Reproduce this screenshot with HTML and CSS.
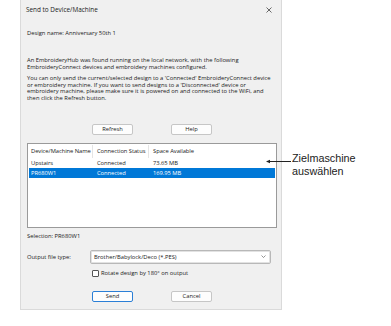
FILE: index.html
```html
<!DOCTYPE html>
<html lang="en">
<head>
    <meta charset="UTF-8">
    <title>Send to Device/Machine</title>
    <link rel="stylesheet" href="styles.css">
</head>
<body>
    <div class="page">
        <div class="dialog">
            <div class="title-bar">
                <span>Send to Device/Machine</span>
                <svg class="close" width="6" height="6" viewBox="0 0 6 6"><path d="M0.5 0.5L5.5 5.5M5.5 0.5L0.5 5.5" stroke="#444" stroke-width="0.8"/></svg>
            </div>

            <p class="design-name">Design name: Anniversary 50th 1</p>

            <p class="info first">An EmbroideryHub was found running on the local network, with the following<br>EmbroideryConnect devices and embroidery machines configured.</p>
            <p class="info">You can only send the current/selected design to a 'Connected' EmbroideryConnect device<br>or embroidery machine. If you want to send designs to a 'Disconnected' device or<br>embroidery machine, please make sure it is powered on and connected to the WiFi, and<br>then click the Refresh button.</p>

            <div class="button-row top-buttons">
                <button class="btn">Refresh</button>
                <button class="btn">Help</button>
            </div>

            <div class="device-list">
                <div class="list-row list-header">
                    <span class="col-name">Device/Machine Name</span>
                    <span class="col-status">Connection Status</span>
                    <span class="col-space">Space Available</span>
                </div>
                <div class="list-row">
                    <span class="col-name">Upstairs</span>
                    <span class="col-status">Connected</span>
                    <span class="col-space">73.65 MB</span>
                </div>
                <div class="list-row selected">
                    <span class="col-name">PR680W1</span>
                    <span class="col-status">Connected</span>
                    <span class="col-space">169.95 MB</span>
                </div>
            </div>

            <p class="selection">Selection: PR680W1</p>

            <div class="output-row">
                <span class="output-label">Output file type:</span>
                <div class="select-box">
                    <span>Brother/Babylock/Deco (*.PES)</span>
                    <svg width="5" height="3" viewBox="0 0 5 3"><path d="M0.5 0.5L2.5 2.5L4.5 0.5" fill="none" stroke="#666" stroke-width="0.7"/></svg>
                </div>
            </div>

            <label class="rotate">
                <span class="checkbox"></span>
                <span>Rotate design by 180° on output</span>
            </label>

            <div class="button-row bottom-buttons">
                <button class="btn default">Send</button>
                <button class="btn">Cancel</button>
            </div>
        </div>

        <div class="callout">
            <svg class="arrow" width="26" height="5" viewBox="0 0 26 5"><path d="M2 2.5H25" stroke="#222" stroke-width="1"/><path d="M0 2.5L4 0.8V4.2Z" fill="#222"/></svg>
            <span class="callout-text">Zielmaschine<br>auswählen</span>
        </div>
    </div>
</body>
</html>
```

FILE: styles.css
```css
body {
    margin: 0;
    background-color: #fff;
    font-family: "Open Sans", "Liberation Sans", sans-serif;
    color: #1a1a1a;
}

.page {
    position: relative;
    width: 391px;
    height: 326px;
}

.dialog {
    margin-left: 20px;
    width: 262px;
    height: 310px;
    box-sizing: border-box;
    background-color: #f0f0f0;
    border: 1px solid #dadada;
    border-top: none;
    padding: 0 6px 0 6px;
    font-size: 5.8px;
    line-height: 6px;
}

.title-bar {
    display: flex;
    justify-content: space-between;
    align-items: center;
    height: 20px;
    margin-left: -1px;
    font-size: 6.4px;
}

.title-bar .close {
    margin-right: 3px;
}

p {
    margin: 0;
}

.design-name {
    margin-top: 10px;
}

.info {
    white-space: nowrap;
    line-height: 6.6px;
}

.info.first {
    margin-top: 21px;
}

.info + .info {
    margin-top: 5px;
}

.button-row {
    display: flex;
    gap: 38px;
    padding-left: 65px;
}

.top-buttons {
    margin-top: 22px;
}

.btn {
    width: 41px;
    height: 11px;
    padding: 0;
    font-family: inherit;
    font-size: 5.8px;
    line-height: 9px;
    color: #1a1a1a;
    background-color: #fdfdfd;
    border: 1px solid #c6c6c6;
    border-radius: 2px;
}

.btn.default {
    border-color: #2b7fd6;
}

.device-list {
    margin-top: 8px;
    width: 250px;
    height: 85px;
    box-sizing: border-box;
    background-color: #fff;
    border: 1px solid #9a9a9a;
    padding: 1px;
}

.list-row {
    display: flex;
    height: 10px;
    align-items: center;
    white-space: nowrap;
    letter-spacing: -0.05px;
}

.list-header {
    height: 13px;
}

.list-row span {
    padding-left: 2px;
    box-sizing: border-box;
}

.list-header span {
    border-right: 1px solid #e5e5e5;
    height: 13px;
    line-height: 13px;
}

.list-header .col-space {
    border-right: none;
}

.col-name {
    width: 64px;
}

.col-status {
    width: 56px;
    padding-left: 4px !important;
}

.col-space {
    flex: 1;
    padding-left: 4px !important;
}

.list-row.selected {
    background-color: #0078d7;
    color: #fff;
}

.selection {
    margin-top: 5px;
}

.output-row {
    display: flex;
    align-items: center;
    margin-top: 11px;
}

.output-label {
    width: 63px;
}

.select-box {
    display: flex;
    align-items: center;
    justify-content: space-between;
    width: 181px;
    height: 14px;
    box-sizing: border-box;
    background-color: #fff;
    border: 1px solid #b8b8b8;
    box-shadow: inset 0 0 0 1px #e2e2e2;
    border-radius: 2px;
    padding: 0 4px 0 3px;
}

.rotate {
    display: flex;
    align-items: center;
    gap: 2px;
    margin-top: 6px;
    margin-left: 65px;
}

.checkbox {
    width: 7px;
    height: 7px;
    box-sizing: border-box;
    border: 1px solid #555;
    border-radius: 1px;
    background-color: #fff;
}

.bottom-buttons {
    margin-top: 14px;
}

.callout {
    position: absolute;
    left: 266px;
    top: 152px;
    display: flex;
    align-items: flex-start;
}

.arrow {
    margin-top: 7px;
}

.callout-text {
    font-family: "Liberation Sans", Arial, sans-serif;
    font-size: 10.8px;
    line-height: 13px;
    color: #222;
}
```
